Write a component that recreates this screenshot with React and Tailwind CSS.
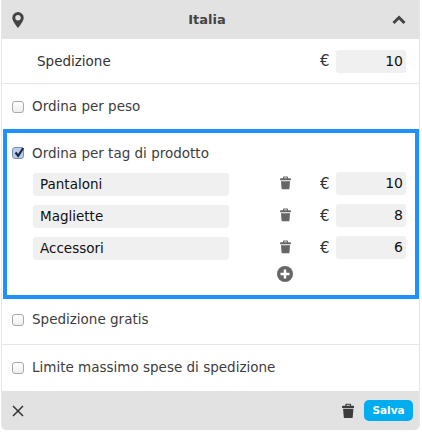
const font = { fontFamily: '"DejaVu Sans", sans-serif' };

function Trash({ size = 11, color = "#666" }) {
  return (
    <svg width={size} height={size * 1.25} viewBox="0 0 14 17" fill={color} className="block">
      <path d="M4.800 0.500h4.400a1 1 0 0 1 1 1V2.700h2.900a.8.8 0 0 1 .8.8V5.300H.1V3.500a.8.8 0 0 1 .8-.8h2.900V1.500a1 1 0 0 1 1-1zM5.200 1.700v1h3.600v-1z" />
      <path d="M1.200 6.300h11.600l-.8 9.300a1.200 1.200 0 0 1-1.200 1.100H3.200A1.200 1.200 0 0 1 2 15.600z" />
    </svg>
  );
}

function Check({ checked }) {
  return (
    <span className={`relative w-[12px] h-[12px] shrink-0 rounded-[3px] border ${checked ? "bg-[#b9cdea] border-[#7f8fb0]" : "border-[#a9a9a9] bg-gradient-to-b from-[#ffffff] to-[#eeeeee]"}`}>
      {checked && (
        <svg className="absolute left-[0px] top-[-2px]" width="13" height="13" viewBox="0 0 13 13" fill="none">
          <path d="M2.500 6.500L5.200 9.800L10.200 2" stroke="#1d2b49" strokeWidth="2.200" />
        </svg>
      )}
    </span>
  );
}

function CheckRow({ label, checked }) {
  return (
    <div className="flex items-center gap-[8px] text-[13.500px] text-[#3d3d3d]">
      <Check checked={checked} />
      <span>{label}</span>
    </div>
  );
}

function Amount({ value }) {
  return (
    <div className="flex items-center">
      <span className="text-[15px] text-[#333] w-[16px]">€</span>
      <div className="w-[70px] h-[23px] rounded-[3px] bg-[#f0f0f0] text-right pr-[3px] text-[14px] leading-[23px] text-[#111]">{value}</div>
    </div>
  );
}

function TagRow({ name, value }) {
  return (
    <div className="flex items-start h-[23px]">
      <div className="w-[196px] h-[23px] mt-[1px] rounded-[3px] bg-[#f0f0f0] pl-[7px] text-[13.500px] leading-[23px] text-[#111]">{name}</div>
      <div className="w-[91px] flex justify-center pt-[4px]"><span className="ml-[21px]"><Trash /></span></div>
      <Amount value={value} />
    </div>
  );
}

export default function App() {
  return (
    <div style={font} className="w-[422px] h-[432px] bg-white">
      <div className="w-[419px] h-[430px] ml-[1px] border-x border-[#e6e6e6] rounded-b-[5px] flex flex-col overflow-hidden">
        <div className="h-[39px] shrink-0 bg-[#e2e2e2] flex items-center justify-between pl-[10px] pr-[13px]">
          <svg width="12" height="16" viewBox="0 0 12 16" className="mt-[1px]">
            <path fillRule="evenodd" fill="#444" d="M6 0a5.700 5.700 0 0 1 5.700 5.700c0 3-3.700 7.800-5.700 10.300C4 13.500.3 8.700.3 5.700A5.700 5.700 0 0 1 6 0zm0 3a2.700 2.700 0 1 0 0 5.400A2.700 2.700 0 0 0 6 3z" />
          </svg>
          <span className="text-[13px] font-bold text-[#444] mr-[2px]">Italia</span>
          <svg width="14" height="10" viewBox="0 0 14 10" fill="none">
            <path d="M1.500 8L7 2.500L12.500 8" stroke="#444" strokeWidth="3" />
          </svg>
        </div>
        <div className="h-[45px] shrink-0 border-b border-[#e6e6e6] flex items-center justify-between pl-[35px] pr-[13px] text-[13.500px] text-[#333]">
          <span>Spedizione</span>
          <Amount value="10" />
        </div>
        <div className="h-[45px] shrink-0 flex items-center pl-[10px]">
          <CheckRow label="Ordina per peso" />
        </div>
        <div className="h-[170px] w-[416px] ml-[1px] shrink-0 border-[4px] border-[#1e90ff] pl-[5px] pt-[10px]">
          <CheckRow label="Ordina per tag di prodotto" checked />
          <div className="pl-[21px] mt-[9px] flex flex-col gap-[9px]">
            <TagRow name="Pantaloni" value="10" />
            <TagRow name="Magliette" value="8" />
            <TagRow name="Accessori" value="6" />
          </div>
          <div className="pl-[265px] mt-[7px]">
            <svg width="16" height="16" viewBox="0 0 16 16">
              <circle cx="8" cy="8" r="8" fill="#666" />
              <path d="M8 3.500v9M3.500 8h9" stroke="#fff" strokeWidth="2.500" />
            </svg>
          </div>
        </div>
        <div className="h-[46px] shrink-0 border-b border-[#e6e6e6] flex items-center pl-[10px] pb-[4px]">
          <CheckRow label="Spedizione gratis" />
        </div>
        <div className="h-[46px] shrink-0 flex items-center pl-[10px] pb-[1px]">
          <CheckRow label="Limite massimo spese di spedizione" />
        </div>
        <div className="flex-1 bg-[#e2e2e2] flex items-center justify-between pl-[10px] pr-[6px]">
          <svg width="12" height="12" viewBox="0 0 12 12" fill="none">
            <path d="M1 1l10 10M11 1L1 11" stroke="#333" strokeWidth="1.500" />
          </svg>
          <div className="flex items-center gap-[10px]">
            <Trash size={12.500} color="#3c3c3c" />
            <span className="w-[49px] h-[21px] rounded-[5px] bg-[#00adf0] text-white text-[10.500px] font-bold text-center leading-[21px]">Salva</span>
          </div>
        </div>
      </div>
    </div>
  );
}
